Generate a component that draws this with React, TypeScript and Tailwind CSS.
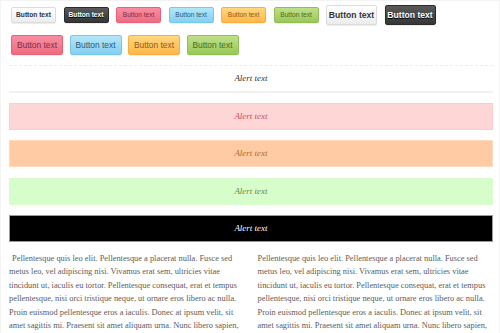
import React from 'react';

const smallButtons = [
  'bg-gradient-to-b from-[#ffffff] to-[#ececec] border-[#dcdcdc] text-[#333] font-bold',
  'bg-gradient-to-b from-[#5a5a5a] to-[#363636] border-[#2a2a2a] text-white font-bold [text-shadow:0_1px_0_#000]',
  'bg-gradient-to-b from-[#fa8ea1] to-[#ef6a82] border-[#e2657c] text-[#7c2f3f]',
  'bg-gradient-to-b from-[#b3e6fa] to-[#83d0f1] border-[#7cc6e6] text-[#2f5a70]',
  'bg-gradient-to-b from-[#ffd77f] to-[#ffb845] border-[#f2b04a] text-[#8a5a1c]',
  'bg-gradient-to-b from-[#bfe08a] to-[#99c857] border-[#92bf55] text-[#4d6a22]',
];

const bigButtons = [
  'bg-gradient-to-b from-[#ffffff] to-[#ececec] border-[#dcdcdc] text-[#333] font-bold',
  'bg-gradient-to-b from-[#5a5a5a] to-[#363636] border-[#2a2a2a] text-white font-bold [text-shadow:0_1px_0_#000]',
];

const midButtons = [
  'bg-gradient-to-b from-[#fa8ea1] to-[#ef6a82] border-[#e2657c] text-[#7c2f3f]',
  'bg-gradient-to-b from-[#b3e6fa] to-[#83d0f1] border-[#7cc6e6] text-[#2f5a70]',
  'bg-gradient-to-b from-[#ffd77f] to-[#ffb845] border-[#f2b04a] text-[#8a5a1c]',
  'bg-gradient-to-b from-[#bfe08a] to-[#99c857] border-[#92bf55] text-[#4d6a22]',
];

const alerts = [
  { cls: 'bg-[#ffd6d6] border-[#ffcaca] text-[#c4506a] mt-[10px]' },
  { cls: 'bg-[#ffcba5] border-[#ffd9bc] text-[#b36a2a] mt-[10px]' },
  { cls: 'bg-[#d6fdca] border-[#d6fdca] text-[#6b8a4c] mt-[11px]' },
  { cls: 'bg-black border-[#9a9a9a] text-white mt-[10px]' },
];

const lines = [
  'Pellentesque quis leo elit. Pellentesque a placerat nulla. Fusce sed',
  'metus leo, vel adipiscing nisi. Vivamus erat sem, ultricies vitae',
  'tincidunt ut, iaculis eu tortor. Pellentesque consequat, erat et tempus',
  'pellentesque, nisi orci tristique neque, ut ornare eros libero ac nulla.',
  'Proin euismod pellentesque eros a iaculis. Donec at ipsum velit, sit',
  'amet sagittis mi. Praesent sit amet aliquam urna. Nunc libero sapien,',
];

const serif = "font-['Liberation_Serif',Georgia,serif]";

const Text: React.FC<{ indent?: boolean }> = ({ indent }) => (
  <div className={`${serif} text-[8.4px] leading-[13.4px] text-[#5c5c5c] whitespace-nowrap`}>
    {lines.map((l, i) => (
      <div key={i} className={i === 0 && indent ? 'pl-[3px]' : ''}>{l}</div>
    ))}
  </div>
);

const App: React.FC = () => {
  return (
    <div className="w-[500px] h-[333px] overflow-hidden bg-white border-t border-l border-r border-[#f3f3f3] font-['Liberation_Sans',Arial,sans-serif]">
      {/* Button rows */}
      <div className="flex items-center gap-[7.5px] pl-[10px] pt-[4px] h-[24px]">
        {smallButtons.map((c, i) => (
          <div key={i} className={`w-[45px] h-[16px] flex items-center justify-center rounded-[2px] border text-[6.6px] shadow-[0_1px_1px_rgba(0,0,0,0.08)] ${c}`}>
            Button text
          </div>
        ))}
        {bigButtons.map((c, i) => (
          <div key={i} className={`w-[51px] h-[20px] flex items-center justify-center rounded-[2px] border text-[8.6px] shadow-[0_1px_1px_rgba(0,0,0,0.08)] ${c}`}>
            Button text
          </div>
        ))}
      </div>
      <div className="flex items-center gap-[6.5px] pl-[10px] mt-[10px]">
        {midButtons.map((c, i) => (
          <div key={i} className={`w-[52px] h-[20px] flex items-center justify-center rounded-[2px] border text-[8.4px] shadow-[0_1px_1px_rgba(0,0,0,0.08)] ${c}`}>
            Button text
          </div>
        ))}
      </div>

      {/* Plain alert */}
      <div className="ml-[8px] mr-[6px] mt-[10px] border-t border-dashed border-[#ececec]" />
      <div className={`ml-[8px] mr-[6px] h-[25px] flex items-center justify-center italic text-[9px] text-[#333] ${serif}`}>
        Alert text
      </div>
      <div className="ml-[8px] mr-[6px] h-[2px] bg-[#f1f1f1]" />

      {/* Colored alerts */}
      {alerts.map((a, i) => (
        <div key={i} className={`ml-[8px] mr-[6px] h-[27px] border flex items-center justify-center italic text-[9px] ${serif} ${a.cls}`}>
          Alert text
        </div>
      ))}

      {/* Paragraphs */}
      <div className="grid grid-cols-2 gap-[13px] ml-[8px] mr-[6px] mt-[10px]">
        <Text indent />
        <Text />
      </div>
    </div>
  );
};

export default App;
